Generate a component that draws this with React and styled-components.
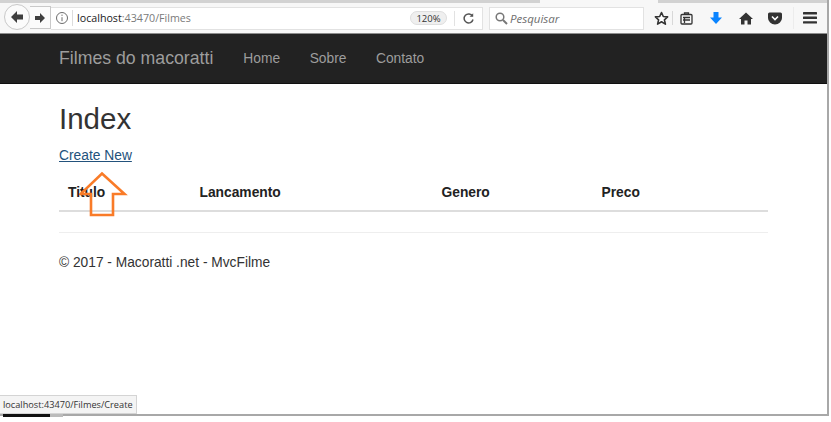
import React from "react";
import styled, { createGlobalStyle } from "styled-components";

const Global = createGlobalStyle`
  html, body { margin: 0; padding: 0; background: #fff; }
  body { font-family: "Liberation Sans", Arial, sans-serif; color: #333; width: 831px; height: 422px; overflow: hidden; }
`;
const Shell = styled.div`position: relative; width: 831px; height: 422px; overflow: hidden; background: #fff;`;
const Frame = styled.div`
  width: 827px; height: 414px; background: #fff; box-sizing: content-box;
  border-right: 2px solid #a8a8a8; border-bottom: 2px solid #a8a8a8;
  display: flex; flex-direction: column;
`;
const TabStrip = styled.div`height: 3px; background: #d2d2d2; display: flex; padding-left: 540px;`;
const ActiveTab = styled.div`width: 118px; background: #f7f7f7;`;
const Toolbar = styled.div`
  height: 31px; background: #f7f7f7; border-bottom: 1px solid #8c8c8c; box-sizing: border-box;
  display: flex; align-items: center; position: relative; padding: 0 0 0 51px;
`;
const BackCircle = styled.div`
  position: absolute; left: 4px; top: 1px; width: 26px; height: 26px; border-radius: 50%;
  background: #fbfbfb; border: 1px solid #c9c9c9; display: flex; align-items: center; justify-content: center; box-sizing: border-box;
`;
const Forward = styled.div`
  position: absolute; left: 30px; top: 3px; width: 21px; height: 23px; display: flex; align-items: center; justify-content: center;
  background: #fbfbfb; border: 1px solid #c9c9c9; border-left: 0; box-sizing: border-box;
`;
const UrlBar = styled.div`
  width: 432px; height: 23px; background: #fff; border: 1px solid #e2e2e2; border-left: 0; box-sizing: border-box;
  display: flex; align-items: center; font-family: "Open Sans", sans-serif; font-size: 10.7px; color: #7a7a7a;
`;
const InfoSlot = styled.div`width: 21px; display: flex; justify-content: center;`;
const UrlDivider = styled.div`width: 1px; height: 16px; background: #dcdcdc; margin-right: 4px;`;
const Host = styled.span`color: #1a1a1a;`;
const Spacer = styled.div`flex: 1;`;
const Zoom = styled.div`
  width: 37px; height: 14px; border-radius: 7px; background: #efefef; border: 1px solid #dedede; box-sizing: border-box;
  font-size: 9.5px; color: #333; display: flex; align-items: center; justify-content: center; margin-right: 7px;
`;
const Reload = styled.div`width: 28px; height: 15px; display: flex; align-items: center; justify-content: center; box-sizing: border-box; border-left: 1px solid #e2e2e2;`;
const SearchBar = styled.div`
  width: 155px; height: 23px; margin-left: 6px; background: #fff; border: 1px solid #e2e2e2; box-sizing: border-box;
  display: flex; align-items: center; gap: 2px; padding-left: 5px; font-family: "Open Sans", sans-serif; font-style: italic; font-size: 11.5px; color: #6e6e6e;
`;
const ToolIcons = styled.div`display: flex; align-items: center; margin-left: 6px; height: 22px;`;
const ToolIcon = styled.div`width: ${p => p.$w || 29}px; display: flex; justify-content: center; align-items: center;`;
const Sep = styled.div`width: 1px; height: 14px; background: #d8d8d8;`;
const Sep2 = styled.div`width: 1px; height: 22px; background: #ececec; margin-left: 3px;`;
const Navbar = styled.nav`
  height: 50px; background: #222; border-bottom: 1px solid #101010; box-sizing: border-box;
  display: flex; align-items: center; padding-left: 59px;
`;
const Brand = styled.a`font-size: 17.7px; color: #9d9d9d; margin-right: 30px;`;
const NavLink = styled.a`font-size: 13.8px; color: #9d9d9d; margin-right: 29.5px;`;
const Main = styled.main`padding: 0 59px; position: relative;`;
const Title = styled.h1`font-size: 29.5px; font-weight: 400; color: #333; margin: 18px 0 0; line-height: 34px;`;
const CreateLink = styled.a`display: inline-block; font-size: 13.8px; line-height: 16px; color: #23527c; text-decoration: underline; margin-top: 12px;`;
const HeaderRow = styled.div`
  display: grid; grid-template-columns: 131.5px 242px 160px 1fr; height: 39px; margin-top: 9px; box-sizing: border-box;
  border-bottom: 2px solid #ddd; padding: 12px 0 0 9px; font-size: 13.8px; font-weight: 700; color: #222; line-height: 16px;
  width: 709px;
`;
const Rule = styled.hr`width: 709px; border: 0; border-top: 1px solid #eee; margin: 20px 0 0;`;
const Footer = styled.p`font-size: 13.75px; color: #333; margin: 22px 0 0; line-height: 16px;`;
const Arrow = styled.svg`position: absolute; left: 79px; top: 171px;`;
const Status = styled.div`
  position: absolute; left: 0; top: 395px; height: 19px; padding: 0 0 0 3px; background: #f4f4f4; border: 1px solid #d4d4d4; border-left: 0; box-sizing: border-box;
  font-family: "Open Sans", sans-serif; font-size: 9.2px; line-height: 17px; color: #333; width: 137px; white-space: nowrap;
`;
const BottomBar = styled.div`position: absolute; top: 414px; left: 3px; width: 47px; height: 3px; background: #111;`;
const BottomGrey = styled.div`position: absolute; top: 414px; left: 50px; width: 13px; height: 3px; background: #bbb;`;

export default function App() {
  return (
    <Shell>
      <Global />
      <Frame>
        <TabStrip><ActiveTab /></TabStrip>
        <Toolbar>
          <BackCircle>
            <svg width="14" height="14" viewBox="0 0 14 14"><path d="M7 1 1 7l6 6V9.500h6v-5H7z" fill="#3f3f3f" /></svg>
          </BackCircle>
          <Forward>
            <svg width="12" height="12" viewBox="0 0 12 12"><path d="M6 1l5 5-5 5V8H1V4h5z" fill="#3f3f3f" /></svg>
          </Forward>
          <UrlBar>
            <InfoSlot>
              <svg width="14" height="14" viewBox="0 0 14 14" fill="none" stroke="#6d6d6d"><circle cx="7" cy="7" r="5.500" /><path d="M7 6.200v4M7 3.600v1.300" /></svg>
            </InfoSlot>
            <UrlDivider />
            <span><Host>localhost</Host>:43470/Filmes</span>
            <Spacer />
            <Zoom>120%</Zoom>
            <Reload>
              <svg width="13" height="13" viewBox="0 0 13 13" fill="none" stroke="#555" strokeWidth="1.500"><path d="M10.500 4.200A4.500 4.500 0 1 0 11 7.500" /><path d="M11.200 1.200v3.600H7.600" fill="#555" stroke="none" /></svg>
            </Reload>
          </UrlBar>
          <SearchBar>
            <svg width="13" height="13" viewBox="0 0 13 13" fill="none" stroke="#777" strokeWidth="1.500"><circle cx="5" cy="5" r="3.800" /><path d="M8 8l4 4" strokeWidth="2" /></svg>
            Pesquisar
          </SearchBar>
          <ToolIcons>
            <ToolIcon $w={22}>
              <svg width="15" height="15" viewBox="0 0 15 15"><path d="M7.500 1.500l1.800 4 4.300.4-3.200 2.900 1 4.300-3.900-2.300-3.900 2.300 1-4.300L1.400 5.900l4.300-.4z" fill="#fff" stroke="#333" strokeWidth="1.600" strokeLinejoin="round" /></svg>
            </ToolIcon>
            <Sep />
            <ToolIcon $w={26}>
              <svg width="13" height="13" viewBox="0 0 13 13" fill="none" stroke="#333" strokeWidth="1.300"><rect x="1" y="2.500" width="11" height="9.500" rx="1" /><path d="M4.500 2.500V1h4v1.500M3 5.500h7M3 8h7M4.500 5v6" /></svg>
            </ToolIcon>
            <ToolIcon $w={33}>
              <svg width="14" height="14" viewBox="0 0 14 14"><path d="M4.500 1h5v5.500H13L7 13 1 6.500h3.500z" fill="#0a84ff" /></svg>
            </ToolIcon>
            <ToolIcon $w={28}>
              <svg width="14" height="13" viewBox="0 0 14 13"><path d="M7 .5 0 7h2v5.500h3.500V8.500h3v4H12V7h2z" fill="#333" /></svg>
            </ToolIcon>
            <ToolIcon $w={30}>
              <svg width="14" height="13" viewBox="0 0 14 13"><path d="M1.500.5h11A1.500 1.500 0 0 1 14 2v4a7 6.500 0 0 1-14 0V2A1.500 1.500 0 0 1 1.500.5z" fill="#333" /><path d="M4 4.500l3 3 3-3" fill="none" stroke="#fff" strokeWidth="1.600" /></svg>
            </ToolIcon>
            <Sep2 />
            <ToolIcon $w={31}>
              <svg width="14" height="12" viewBox="0 0 14 12" fill="#333"><rect y="0" width="14" height="2.400" rx=".5" /><rect y="4.600" width="14" height="2.400" rx=".5" /><rect y="9.200" width="14" height="2.400" rx=".5" /></svg>
            </ToolIcon>
          </ToolIcons>
        </Toolbar>
        <Navbar>
          <Brand>Filmes do macoratti</Brand>
          <NavLink>Home</NavLink>
          <NavLink>Sobre</NavLink>
          <NavLink>Contato</NavLink>
        </Navbar>
        <Main>
          <Title>Index</Title>
          <CreateLink>Create New</CreateLink>
          <HeaderRow>
            <span>Titulo</span>
            <span>Lancamento</span>
            <span>Genero</span>
            <span>Preco</span>
          </HeaderRow>
          <Rule />
          <Footer>© 2017 - Macoratti .net - MvcFilme</Footer>
        </Main>
      </Frame>
      <Arrow width="50" height="48" viewBox="0 0 50 48">
        <path d="M12 23H1.500L23 2.500 45.500 23H34V44H12Z" fill="none" stroke="#f97b28" strokeWidth="2.600" />
      </Arrow>
      <Status>localhost:43470/Filmes/Create</Status>
      <BottomBar />
      <BottomGrey />
    </Shell>
  );
}
